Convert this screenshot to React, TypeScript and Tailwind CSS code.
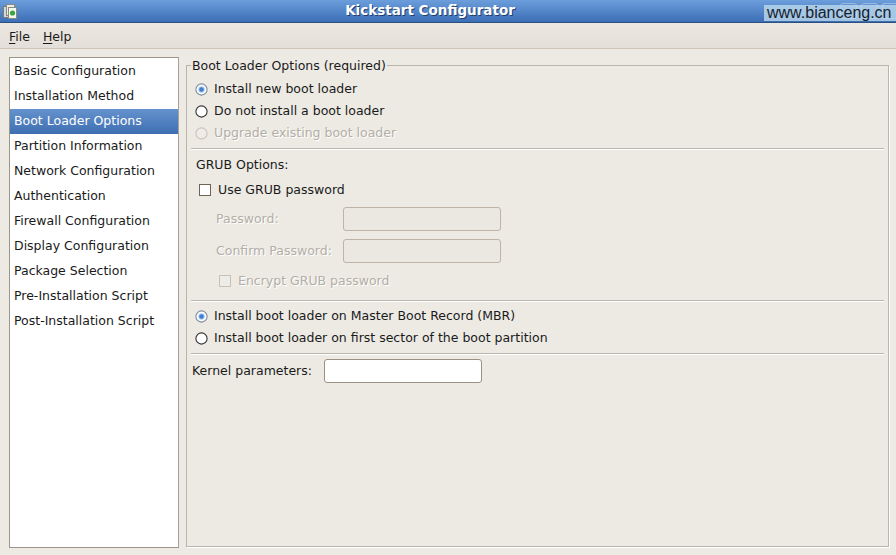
import React from 'react';

const navItems = [
  'Basic Configuration',
  'Installation Method',
  'Boot Loader Options',
  'Partition Information',
  'Network Configuration',
  'Authentication',
  'Firewall Configuration',
  'Display Configuration',
  'Package Selection',
  'Pre-Installation Script',
  'Post-Installation Script',
];

const Radio = ({ checked, disabled }: { checked?: boolean; disabled?: boolean }) => (
  <svg width="13" height="13" viewBox="0 0 13 13" className="shrink-0">
    <circle
      cx="6.5"
      cy="6.5"
      r="5.6"
      fill={disabled ? '#efece8' : '#ffffff'}
      stroke={disabled ? '#c9c3ba' : checked ? '#7d8b9c' : '#333333'}
      strokeWidth="1.1"
    />
    {checked && <circle cx="6.5" cy="6.5" r="3.2" fill="#a9c8ee" />}
    {checked && <circle cx="6.5" cy="6.5" r="2.2" fill="#3f7fd0" />}
  </svg>
);

const Check = ({ disabled }: { disabled?: boolean }) => (
  <span
    className={
      disabled
        ? 'h-[12px] w-[12px] shrink-0 border border-[#c8c1b7] bg-[#efece8]'
        : 'h-[12px] w-[12px] shrink-0 border border-[#6e6355] bg-white'
    }
  />
);

const Separator = ({ className }: { className: string }) => (
  <div className={`h-[2px] border-t border-[#bab5ad] border-b border-b-white ${className}`} />
);

const TitleBar = () => (
  <div className="relative flex h-[23px] shrink-0 items-center border-b border-[#2d4f80] bg-linear-to-b from-[#6c9edc] to-[#3c6eb6]">
    {/* app icon */}
    <svg width="14" height="17" viewBox="0 0 14 17" className="absolute left-[3px] top-[3px]">
      <rect x="0.5" y="3.5" width="8" height="11" fill="#d7d7d2" stroke="#7d7d78" />
      <rect x="3.5" y="1.5" width="8" height="11" fill="#ececE8" stroke="#8a8a85" />
      <rect x="5.5" y="4.5" width="8" height="11" fill="#f6f6f3" stroke="#8a8a85" />
      <circle cx="9.5" cy="10" r="2.6" fill="#3da53a" />
    </svg>
    <div className="flex-1 pr-9 text-center text-[13.5px] font-bold leading-none text-white [text-shadow:1px_1px_0_#1f3f6e]">
      Kickstart Configurator
    </div>
    {/* window buttons under the watermark */}
    <div className="absolute right-0 top-[3px] flex gap-[4px]">
      <span className="h-[16px] w-[17px] rounded-[3px] border border-[#9ab9e0]" />
      <span className="h-[16px] w-[17px] rounded-[3px] border border-[#9ab9e0]" />
      <span className="h-[16px] w-[14px] rounded-l-[3px] border border-r-0 border-[#9ab9e0]" />
    </div>
    <div className="absolute right-0 top-[5px] flex h-[16px] w-[132px] items-center bg-[#bcd9eccc] pl-[3px] font-['Liberation_Sans',Arial,sans-serif] text-[16px] leading-none text-[#15212e]">
      www.bianceng.cn
    </div>
  </div>
);

const MenuBar = () => (
  <div className="flex h-[26px] shrink-0 items-center gap-[13px] border-b border-[#cfc4b5] bg-linear-to-b from-[#ece8e2] to-[#e3ded7] pl-[9px] pt-[3px]">
    <span>
      <span className="underline underline-offset-2">F</span>ile
    </span>
    <span>
      <span className="underline underline-offset-2">H</span>elp
    </span>
  </div>
);

export default function App() {
  return (
    <div className="flex h-[555px] w-[896px] flex-col overflow-hidden bg-[#edeae4] font-['DejaVu_Sans',sans-serif] text-[12.5px] text-[#1a1a1a]">
      <TitleBar />
      <MenuBar />
      <div className="flex min-h-0 flex-1 gap-[7px] pb-[7px] pl-[9px] pr-[7px] pt-2">
        <ul className="w-[170px] shrink-0 border border-[#9d958a] border-r-[#a8a196] bg-white pt-[1px]">
          {navItems.map((item) => (
            <li
              key={item}
              className={
                item === 'Boot Loader Options'
                  ? 'flex h-[25px] items-center bg-linear-to-b from-[#6592cd] to-[#3e6fb2] pl-[4px] text-white'
                  : 'flex h-[25px] items-center pl-[4px]'
              }
            >
              {item}
            </li>
          ))}
        </ul>

        <fieldset className="mb-[1px] min-w-0 flex-1 border border-[#b9b4ac] shadow-[1px_1px_0_#ffffff]">
          <legend className="ml-[4px] px-[1px] leading-[17px] text-[#1a1a1a]">Boot Loader Options (required)</legend>
          <div className="flex flex-col px-1 pt-[4px]">
            <div className="flex h-[22px] items-center gap-[6px] pl-1">
              <Radio checked />
              <span>Install new boot loader</span>
            </div>
            <div className="flex h-[22px] items-center gap-[6px] pl-1">
              <Radio />
              <span>Do not install a boot loader</span>
            </div>
            <div className="flex h-[22px] items-center gap-[6px] pl-1 text-[#b3aea6] [text-shadow:1px_1px_0_#ffffff]">
              <Radio disabled />
              <span>Upgrade existing boot loader</span>
            </div>

            <Separator className="mt-1" />

            <div className="mt-1 flex h-[22px] items-center pl-[5px]">GRUB Options:</div>
            <div className="mt-[3px] flex h-[22px] items-center gap-[7px] pl-2">
              <Check />
              <span>Use GRUB password</span>
            </div>
            <div className="mt-[6px] flex h-[24px] items-center pl-[25px] text-[#b3aea6] [text-shadow:1px_1px_0_#ffffff]">
              <span className="w-[127px] shrink-0">Password:</span>
              <div className="h-[24px] w-[158px] rounded-[3px] border border-[#bdb3a6] bg-[#ebe8e2]" />
            </div>
            <div className="mt-2 flex h-[24px] items-center pl-[25px] text-[#b3aea6] [text-shadow:1px_1px_0_#ffffff]">
              <span className="w-[127px] shrink-0">Confirm Password:</span>
              <div className="h-[24px] w-[158px] rounded-[3px] border border-[#bdb3a6] bg-[#ebe8e2]" />
            </div>
            <div className="mt-[7px] flex h-[22px] items-center gap-[7px] pl-[28px] text-[#b3aea6] [text-shadow:1px_1px_0_#ffffff]">
              <Check disabled />
              <span>Encrypt GRUB password</span>
            </div>

            <Separator className="mt-2" />

            <div className="mt-[3px] flex h-[22px] items-center gap-[6px] pl-1">
              <Radio checked />
              <span>Install boot loader on Master Boot Record (MBR)</span>
            </div>
            <div className="flex h-[22px] items-center gap-[6px] pl-1">
              <Radio />
              <span>Install boot loader on first sector of the boot partition</span>
            </div>

            <Separator className="mt-1" />

            <div className="mt-1 flex h-[24px] items-center pl-[1px]">
              <span className="w-[132px] shrink-0">Kernel parameters:</span>
              <div className="h-[24px] w-[158px] rounded-[3px] border border-[#9b9182] bg-white" />
            </div>
          </div>
        </fieldset>
      </div>
    </div>
  );
}
